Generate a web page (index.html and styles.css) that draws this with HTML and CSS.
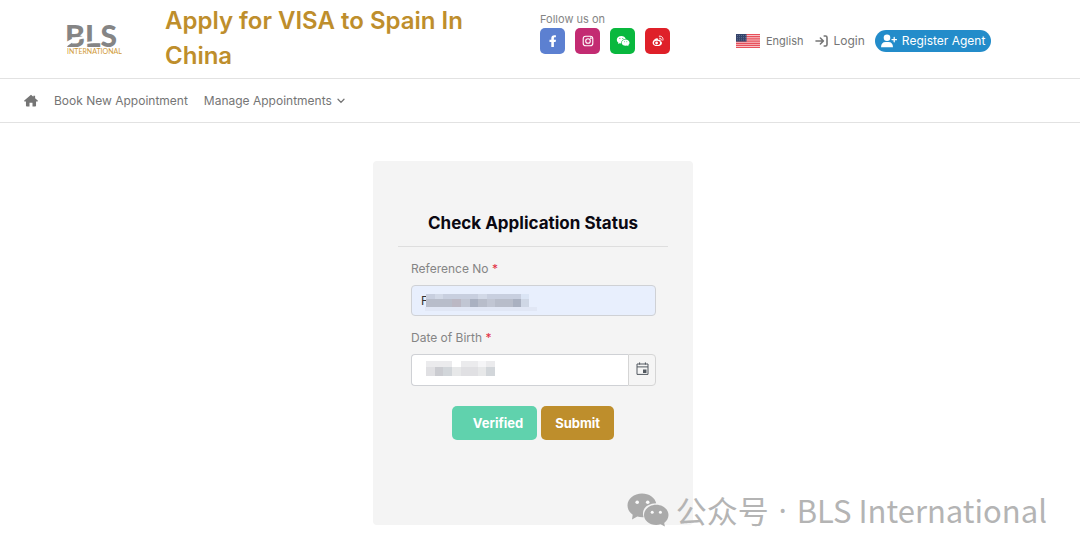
FILE: index.html
```html
<!DOCTYPE html>
<html lang="en">
<head>
<meta charset="utf-8">
<meta name="viewport" content="width=device-width, initial-scale=1">
<title>Check Application Status</title>
<link rel="stylesheet" href="styles.css">
</head>
<body>
<header class="header">
  <a class="logo" href="#" aria-label="BLS International">
    <svg width="56" height="46" viewBox="0 0 56 46">
      <text class="logo-name" x="-1" y="31">BLS</text>
      <path d="M0 26 Q9 20 21 20 L21 22 Q9 23 0 31Z" fill="#fff"/>
      <path d="M20 26 L35 24 L35 26 L20 28Z" fill="#fff"/>
      <text class="logo-sub" x="1" y="38">INTERNATIONAL</text>
    </svg>
  </a>
  <h1 class="title">Apply for VISA to Spain In China</h1>
  <div class="social">
    <span class="social-label">Follow us on</span>
    <div class="social-links">
      <a class="social-link facebook" href="#" aria-label="Facebook"><svg width="12" height="12" viewBox="0 0 12 12"><path d="M4.300 12V6.900H2.500V4.700h1.800V3.300C4.300 1.300 5.400.2 7.400.2c.9 0 1.500.1 1.500.1v2h-.9c-.9 0-1.100.5-1.100 1.100v1.300h2.100L8.600 6.900H6.900V12z" fill="#fff"/></svg></a>
      <a class="social-link instagram" href="#" aria-label="Instagram"><svg width="12" height="12" viewBox="0 0 12 12" fill="none" stroke="#fff" stroke-width="1.100"><rect x="1.200" y="1.200" width="9.600" height="9.600" rx="2.600"/><circle cx="6" cy="6" r="2.300"/><circle cx="8.800" cy="3.200" r=".3"/></svg></a>
      <a class="social-link wechat" href="#" aria-label="WeChat"><svg width="14" height="12" viewBox="0 0 14 12"><path d="M5.400 1C2.800 1 .8 2.700.8 4.800c0 1.200.6 2.200 1.600 2.900L2 9l1.600-.8 1.600.3C5 5.800 7 4 9.700 4 9.200 2.200 7.500 1 5.400 1z" fill="#fff"/><path d="M9.600 4.500c2.200 0 3.900 1.400 3.900 3.200 0 1-.5 1.800-1.300 2.400l.3 1.200-1.400-.7-1.500.2c-2.200 0-3.900-1.400-3.900-3.100s1.700-3.200 3.900-3.200z" fill="#fff"/><g fill="#09b83e"><circle cx="3.900" cy="3.600" r=".5"/><circle cx="6.800" cy="3.600" r=".5"/><circle cx="8.400" cy="6.800" r=".45"/><circle cx="10.800" cy="6.800" r=".45"/></g></svg></a>
      <a class="social-link weibo" href="#" aria-label="Weibo"><svg width="12" height="12" viewBox="0 0 12 12"><path d="M4.700 3.200C3 3.500.6 5.800.6 7.900c0 2 2.200 3.200 4.600 3.200 2.900 0 4.800-1.700 4.800-3.200 0-1-.8-1.500-1.500-1.700.5-1.300-.7-1.900-2.400-1.100.4-1.300-.2-2.100-1.400-1.900z" fill="#fff"/><ellipse cx="5" cy="7.900" rx="3" ry="2.100" fill="#df2029"/><circle cx="4.600" cy="8" r="1.400" fill="#fff"/><path d="M7.600 3.200c1.200-.2 1.900.6 1.600 1.800M7.300 1.200c2.400-.5 4.300 1.500 3.600 4" fill="none" stroke="#fff" stroke-width="1" stroke-linecap="round"/></svg></a>
    </div>
  </div>
  <div class="account">
    <a class="account-link language" href="#">
      <svg width="24" height="14" viewBox="0 0 24 14"><path fill="#f7c3c7" d="M0 0h24v14H0z"/><path d="M0 .5h24M0 2.700h24M0 4.900h24M0 7.100h24M0 9.300h24M0 11.400h24M0 13.500h24" stroke="#e8505b" stroke-width="1.200"/><path fill="#34446b" d="M0 0h10.500v7.600H0z"/><path d="M1 1.500h9M1 3.700h9M1 5.900h9" stroke="#7f8ba6" stroke-width=".6" stroke-dasharray="1 1"/></svg>
      English
    </a>
    <a class="account-link login" href="#">
      <svg width="13" height="12" viewBox="0 0 13 12" fill="none" stroke="#757575" stroke-width="1.600" stroke-linecap="round" stroke-linejoin="round"><path d="M1 6h7M5.400 3 8.400 6l-3 3M9.200 1h1.400c.8 0 1.400.6 1.400 1.400v7.200c0 .8-.6 1.400-1.400 1.400H9.200"/></svg>
      Login
    </a>
    <a class="register" href="#">
      <svg width="16" height="14" viewBox="0 0 16 14"><circle cx="6" cy="3.700" r="3.300" fill="#fff"/><path d="M0 13.200C0 10 1.600 8 4.600 8h2.800c3 0 4.600 2 4.600 5.200z" fill="#fff"/><path d="M13.200 3.400v4.400M11 5.600h4.400" stroke="#fff" stroke-width="1.300" stroke-linecap="round"/></svg>
      Register Agent
    </a>
  </div>
</header>
<nav class="nav">
  <a class="nav-link home" href="#" aria-label="Home"><svg width="14" height="13" viewBox="0 0 15 13"><path d="M7.500.3.300 6.600c-.4.400-.1.900.3.900h1.500V12c0 .5.400.9.900.9h2.900V9h3.200v3.900H12c.5 0 .9-.4.900-.9V7.500h1.500c.5 0 .7-.5.300-.9L11.900 4V1.400H10v1z" fill="#757575"/></svg></a>
  <a class="nav-link" href="#">Book New Appointment</a>
  <a class="nav-link" href="#">Manage Appointments <svg width="8" height="6" viewBox="0 0 8 6"><path d="M1 1.200 4 4.400 7 1.200" fill="none" stroke="#757575" stroke-width="1.300" stroke-linecap="round"/></svg></a>
</nav>
<main class="main">
  <form class="card">
    <h2 class="card-title">Check Application Status</h2>
    <div class="fields">
      <label class="label" for="reference">Reference No <span class="required">*</span></label>
      <div class="control">
        <input class="input filled" id="reference" type="text" value="F">
        <svg class="mask mask-reference" width="112" height="17" viewBox="0 0 112 17" shape-rendering="crispEdges"><path fill="#e1e7f5" d="M0 13h112v4H0z"/><path fill="#c8cfdf" d="M1 0h95v5H1z"/><path fill="#d2d9e7" d="M10 0h8v5h-8zM53 0h9v5h-9z"/><path fill="#b8bdca" d="M1 5h95v8H1z"/><path fill="#bbb8c4" d="M27 5h9v8h-9z"/><path fill="#aab1c1" d="M45 5h8v8h-8zM88 5h8v8h-8z"/><path fill="#c1c6d3" d="M36 5h9v8h-9zM62 5h8v8h-8z"/><path fill="#dbe5f5" d="M96 0h8v5h-8z"/><path fill="#cfd7e5" d="M96 5h8v8h-8z"/></svg>
      </div>
      <label class="label" for="birth">Date of Birth <span class="required">*</span></label>
      <div class="control date">
        <input class="input" id="birth" type="text">
        <button class="picker" type="button" aria-label="Open calendar"><svg width="13" height="13" viewBox="0 0 13 13"><path d="M1 2h11v10.400H1zM1 4.900h11M3.600.4V2.600M9.400.4V2.600" fill="none" stroke="#525960"/><path fill="#525960" d="M7 7.500h3.500V11H7z"/></svg></button>
        <svg class="mask mask-birth" width="69" height="15" viewBox="0 0 69 15" shape-rendering="crispEdges"><path fill="#ebebed" d="M0 0h26v6H0zM35 0h17v6H35zM60 0h9v6h-9z"/><path fill="#f5f5f7" d="M52 0h8v6h-8z"/><path fill="#e0e0e3" d="M0 6h69v9H0z"/><path fill="#cbccd1" d="M9 6h8v9H9z"/><path fill="#d2d6da" d="M17 6h9v9h-9zM60 6h9v9h-9z"/><path fill="#e7e8e9" d="M26 6h9v9h-9zM52 6h8v9h-8z"/></svg>
      </div>
    </div>
    <div class="actions">
      <button class="button verified" type="button">Verified</button>
      <button class="button submit" type="submit">Submit</button>
    </div>
  </form>
</main>
<div class="watermark">
  <svg width="42" height="34" viewBox="0 0 42 34" fill="#aaa"><path d="M15 .5C7 .5.500 5.800.500 12.500c0 3.700 2 7 5.200 9.200L5 26.500l5.300-2.900c2 .6 4 .8 6.300.7C14 16 20 10.600 29.200 10.300 28 4.500 22 .5 15 .5z"/><path d="M29.200 11.700c6.900 0 12.300 4.600 12.300 10.300 0 3.200-1.700 6-4.300 7.900l.7 3.600-4.300-2.200c-1.400.4-2.900.7-4.400.7-6.900 0-12.200-4.500-12.200-10s5.300-10.300 12.200-10.300z"/><g fill="#fafafa"><circle cx="10.200" cy="9.200" r="1.800"/><circle cx="20.700" cy="9.200" r="1.800"/><circle cx="25.200" cy="19.200" r="1.500"/><circle cx="33.400" cy="19.200" r="1.500"/></g></svg>
  <span>公众号</span><span class="dot">·</span><span>BLS International</span>
</div>
</body>
</html>
```
FILE: styles.css
```css
* {
  box-sizing: border-box;
}

body {
  margin: 0;
  background: #fff;
  color: #757575;
  font-family: Inter, "Noto Sans", sans-serif;
  font-size: 12px;
}

a {
  color: inherit;
  text-decoration: none;
}

svg {
  display: block;
  flex: none;
}

.header {
  display: grid;
  grid-template-columns: 99px 375fr 196fr 344fr;
  align-items: center;
  min-height: 79px;
  padding-left: 66px;
  border-bottom: 1px solid #e2e2e2;
}

.logo-name {
  fill: #858585;
  font-family: Lato, sans-serif;
  font-size: 30px;
  font-weight: 900;
}

.logo-sub {
  fill: #d09a35;
  font-family: Lato, sans-serif;
  font-size: 7px;
}

.title {
  margin: 0;
  padding: 0 64px 3px 0;
  color: #be8e2c;
  font-size: 24px;
  font-weight: 600;
  line-height: 35px;
}

.social {
  align-self: start;
  padding-top: 11px;
}

.social-label {
  display: block;
  color: #858585;
  font-size: 11px;
  line-height: 17px;
}

.social-links {
  display: flex;
  gap: 10px;
}

.social-link {
  display: grid;
  place-items: center;
  width: 25px;
  height: 26px;
  border-radius: 5px;
}

.facebook { background: #5c80d1; }
.instagram { background: #c32b72; }
.wechat { background: #09b83e; }
.weibo { background: #df2029; }

.account {
  display: flex;
  align-items: center;
  padding-top: 3px;
  white-space: nowrap;
}

.account-link {
  display: flex;
  align-items: center;
  gap: 6px;
}

.language {
  margin-right: 11px;
  font-size: 11px;
}

.login {
  margin-right: 10px;
}

.register {
  display: flex;
  align-items: center;
  gap: 5px;
  height: 22px;
  padding: 0 6px;
  border-radius: 11px;
  background: #238cca;
  color: #fff;
}

.nav {
  display: flex;
  align-items: center;
  gap: 16px;
  height: 44px;
  padding: 0 24px;
  border-bottom: 1px solid #e2e2e2;
}

.nav-link {
  display: flex;
  align-items: center;
  gap: 5px;
}

.main {
  display: flex;
  justify-content: center;
  padding: 38px 14px 29px 0;
}

.card {
  width: 320px;
  padding: 40px 25px 85px;
  border-radius: 4px;
  background: #f4f4f4;
}

.card-title {
  margin: 0;
  padding: 9px 0;
  border-bottom: 1px solid #dedede;
  color: #0b0912;
  font-size: 17px;
  font-weight: 700;
  line-height: 27px;
  text-align: center;
}

.fields {
  padding: 12px 12px 0 13px;
}

.label {
  display: block;
  color: #858585;
  line-height: 20px;
}

.required {
  color: #e22e43;
}

.control {
  position: relative;
  display: flex;
  margin: 6px 0 12px;
}

.input {
  flex: 1;
  min-width: 0;
  height: 31px;
  padding: 0 9px;
  border: 1px solid #cfd1d5;
  border-radius: 4px;
  background: #fff;
  color: #333;
  font: inherit;
}

.filled {
  background: #e8effd;
}

.date .input {
  height: 32px;
  border-right: 0;
  border-radius: 4px 0 0 4px;
}

.picker {
  display: grid;
  place-items: center;
  width: 28px;
  padding: 0 0 4px;
  border: 1px solid #d5d5d5;
  border-radius: 0 4px 4px 0;
  background: #f5f5f5;
}

.mask {
  position: absolute;
}

.mask-reference {
  top: 9px;
  left: 14px;
}

.mask-birth {
  top: 7px;
  left: 15px;
}

.actions {
  display: flex;
  justify-content: center;
  gap: 4px;
  padding-top: 8px;
}

.button {
  height: 34px;
  padding: 0 14px;
  border: 0;
  border-radius: 5px;
  color: #fff;
  font: 700 13px Inter, "Noto Sans", sans-serif;
}

.verified {
  padding-left: 21px;
  background: #60d2ad;
}

.submit {
  background: #be8e2c;
}

.watermark {
  position: absolute;
  right: 33px;
  bottom: 21px;
  display: flex;
  align-items: center;
  color: #b4b4b4;
  font-family: "Noto Sans CJK SC", sans-serif;
  font-size: 31px;
  line-height: 46px;
  white-space: nowrap;
}

.watermark svg {
  margin-right: 7px;
}

.dot {
  width: 28px;
  font-family: "Noto Sans", sans-serif;
  text-align: center;
}
```
